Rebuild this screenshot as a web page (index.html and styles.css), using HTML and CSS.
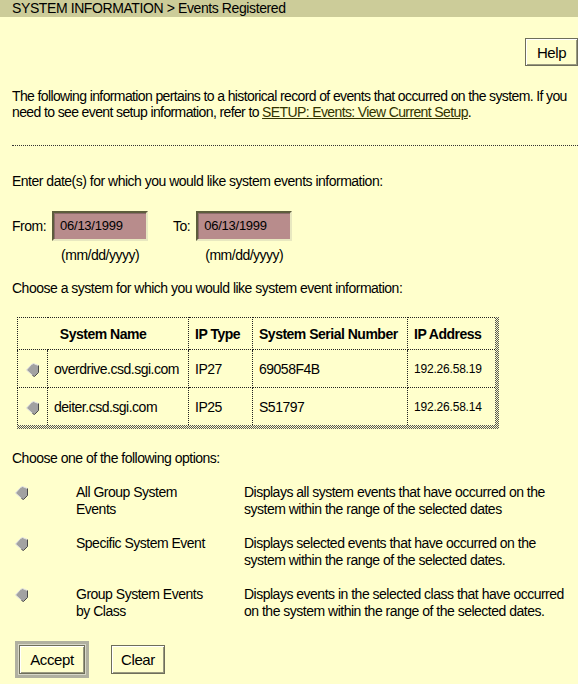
FILE: index.html
```html
<!DOCTYPE html>
<html>
<head>
<meta charset="utf-8">
<link rel="stylesheet" href="styles.css">
</head>
<body>
<div class="titlebar">SYSTEM INFORMATION &gt; Events Registered</div>
<div class="content">
  <div class="help-row"><button class="btn help">Help</button></div>
  <p class="intro">The following information pertains to a historical record of events that occurred on the system. If you<br>need to see event setup information, refer to <a href="#">SETUP: Events: View Current Setup</a>.</p>
  <div class="rule"></div>
  <p class="prompt p-date">Enter date(s) for which you would like system events information:</p>
  <div class="dates">
    <div class="date-group">
      <span class="date-label">From:</span>
      <div class="date-col">
        <div class="field">06/13/1999</div>
        <div class="hint">(mm/dd/yyyy)</div>
      </div>
    </div>
    <div class="date-group">
      <span class="date-label">To:</span>
      <div class="date-col">
        <div class="field">06/13/1999</div>
        <div class="hint">(mm/dd/yyyy)</div>
      </div>
    </div>
  </div>
  <p class="prompt p-sys">Choose a system for which you would like system event information:</p>
  <div class="table-shadow">
    <table class="systems">
      <colgroup>
        <col class="w-radio"><col class="w-name"><col class="w-type"><col class="w-serial"><col class="w-addr">
      </colgroup>
      <tr class="head">
        <th colspan="2" class="c-name">System Name</th>
        <th>IP Type</th>
        <th>System Serial Number</th>
        <th>IP Address</th>
      </tr>
      <tr>
        <td class="c-radio"><svg class="radio" viewBox="0 0 13 14" width="13" height="14"><polygon points="0.5,7 5.5,1.5 7.5,0.5 12.5,2.5 12.5,9.5 8.5,13.5 6.5,12.5" fill="#a2a2a2"/><polyline points="6.5,12.5 0.5,7 5.5,1.5 7.5,0.5 12.5,2.5" fill="none" stroke="#e4e4e4" stroke-width="1"/><polyline points="12.5,2.5 12.5,9.5 8.5,13.5 6.5,12.5" fill="none" stroke="#4a4a4a" stroke-width="1"/></svg></td>
        <td>overdrive.csd.sgi.com</td>
        <td>IP27</td>
        <td>69058F4B</td>
        <td class="small">192.26.58.19</td>
      </tr>
      <tr>
        <td class="c-radio"><svg class="radio" viewBox="0 0 13 14" width="13" height="14"><polygon points="0.5,7 5.5,1.5 7.5,0.5 12.5,2.5 12.5,9.5 8.5,13.5 6.5,12.5" fill="#a2a2a2"/><polyline points="6.5,12.5 0.5,7 5.5,1.5 7.5,0.5 12.5,2.5" fill="none" stroke="#e4e4e4" stroke-width="1"/><polyline points="12.5,2.5 12.5,9.5 8.5,13.5 6.5,12.5" fill="none" stroke="#4a4a4a" stroke-width="1"/></svg></td>
        <td>deiter.csd.sgi.com</td>
        <td>IP25</td>
        <td>S51797</td>
        <td class="small">192.26.58.14</td>
      </tr>
    </table>
  </div>
  <p class="prompt p-opt">Choose one of the following options:</p>
  <div class="options">
    <svg class="radio" viewBox="0 0 13 14" width="13" height="14"><polygon points="0.5,7 5.5,1.5 7.5,0.5 12.5,2.5 12.5,9.5 8.5,13.5 6.5,12.5" fill="#a2a2a2"/><polyline points="6.5,12.5 0.5,7 5.5,1.5 7.5,0.5 12.5,2.5" fill="none" stroke="#e4e4e4" stroke-width="1"/><polyline points="12.5,2.5 12.5,9.5 8.5,13.5 6.5,12.5" fill="none" stroke="#4a4a4a" stroke-width="1"/></svg>
    <div class="opt-label">All Group System<br>Events</div>
    <div class="opt-desc">Displays all system events that have occurred on the<br>system within the range of the selected dates</div>
    <svg class="radio" viewBox="0 0 13 14" width="13" height="14"><polygon points="0.5,7 5.5,1.5 7.5,0.5 12.5,2.5 12.5,9.5 8.5,13.5 6.5,12.5" fill="#a2a2a2"/><polyline points="6.5,12.5 0.5,7 5.5,1.5 7.5,0.5 12.5,2.5" fill="none" stroke="#e4e4e4" stroke-width="1"/><polyline points="12.5,2.5 12.5,9.5 8.5,13.5 6.5,12.5" fill="none" stroke="#4a4a4a" stroke-width="1"/></svg>
    <div class="opt-label">Specific System Event</div>
    <div class="opt-desc">Displays selected events that have occurred on the<br>system within the range of the selected dates.</div>
    <svg class="radio" viewBox="0 0 13 14" width="13" height="14"><polygon points="0.5,7 5.5,1.5 7.5,0.5 12.5,2.5 12.5,9.5 8.5,13.5 6.5,12.5" fill="#a2a2a2"/><polyline points="6.5,12.5 0.5,7 5.5,1.5 7.5,0.5 12.5,2.5" fill="none" stroke="#e4e4e4" stroke-width="1"/><polyline points="12.5,2.5 12.5,9.5 8.5,13.5 6.5,12.5" fill="none" stroke="#4a4a4a" stroke-width="1"/></svg>
    <div class="opt-label">Group System Events<br>by Class</div>
    <div class="opt-desc">Displays events in the selected class that have occurred<br>on the system within the range of the selected dates.</div>
  </div>
  <div class="actions">
    <div class="default-frame"><button class="btn accept">Accept</button></div>
    <button class="btn clear">Clear</button>
  </div>
</div>
</body>
</html>
```
FILE: styles.css
```css
html, body {
  margin: 0;
  padding: 0;
  background: #ffffcc;
}
body {
  font-family: "Liberation Sans", Arial, sans-serif;
  font-size: 14px;
  letter-spacing: -0.5px;
  color: #000;
  width: 578px;
  height: 684px;
  overflow: hidden;
}
.titlebar {
  background: #cccc99;
  height: 17px;
  line-height: 17px;
  padding-left: 12px;
  font-size: 14px;
  letter-spacing: -0.4px;
}
.content {
  padding: 0 0 0 12px;
}
.help-row {
  display: flex;
  justify-content: flex-end;
  padding-top: 21px;
}
.btn {
  font-family: inherit;
  font-size: 15px;
  letter-spacing: -0.4px;
  background: #ffffcc;
  color: #000;
  border: 1px solid #6e6e5a;
  box-shadow: inset 1px 1px 0 #ffffff, inset -1px -1px 0 #9a9a80;
  padding: 0;
  margin: 0;
}
.help {
  width: 53px;
  height: 28px;
}
.intro {
  margin: 22px 0 0 0;
  line-height: 16px;
  white-space: nowrap;
  letter-spacing: -0.62px;
}
.intro a {
  color: #333300;
  text-decoration: underline;
}
.rule {
  margin-top: 25px;
  border-top: 1px dotted #333;
  height: 0;
}
.prompt {
  margin: 0;
  line-height: 17px;
}
.p-date { margin-top: 27px; }
.dates {
  display: flex;
  gap: 25px;
  margin-top: 21px;
}
.date-group {
  display: flex;
  gap: 6px;
}
.date-label {
  line-height: 30px;
}
.date-col {
  display: flex;
  flex-direction: column;
  align-items: center;
}
.field {
  box-sizing: border-box;
  width: 96px;
  height: 30px;
  background: #b88c8c;
  border: 2px solid;
  border-color: #5d5d3c #e8e8c0 #e8e8c0 #5d5d3c;
  box-shadow: inset 1px 1px 0 #8a6a6a;
  font-size: 13px;
  letter-spacing: -0.25px;
  line-height: 26px;
  padding-left: 6px;
}
.hint {
  margin-top: 6px;
  line-height: 17px;
}
.p-sys { margin-top: 16px; }
.table-shadow {
  display: inline-block;
  margin: 20px 0 0 5px;
  padding: 0 4px 4px 0;
  background-color: #ffffcc;
  background-image: repeating-conic-gradient(#555 0 25%, #ffffcc 0 50%);
  background-size: 2px 2px;
}
.systems {
  border-collapse: collapse;
  table-layout: fixed;
  width: 477px;
  background: #ffffcc;
  border-top: 1px dotted #222;
  border-left: 1px dotted #222;
}
.w-radio { width: 30px; }
.w-name { width: 141px; }
.w-type { width: 64px; }
.w-serial { width: 155px; }
.w-addr { width: 87px; }
.systems th, .systems td {
  border: 1px dotted #222;
  text-align: left;
  padding: 0 6px;
  white-space: nowrap;
}
.systems th {
  font-weight: bold;
  height: 31px;
}
.systems td {
  height: 37px;
}
.systems tr:last-child td {
  border-bottom: none;
}
.systems th:last-child, .systems td:last-child {
  border-right: none;
}
.systems th.c-name {
  text-align: center;
}
.systems td.c-radio {
  padding: 0;
  text-align: center;
}
.systems td.c-radio .radio { vertical-align: middle; }
.systems td.small { font-size: 12px; letter-spacing: -0.2px; }
.p-opt { margin-top: 18px; }
.options {
  display: grid;
  grid-template-columns: 64px 168px auto;
  row-gap: 17px;
  margin-top: 17px;
  line-height: 17px;
}
.options .radio {
  margin: 2px 0 0 3px;
}
.actions {
  display: flex;
  align-items: center;
  gap: 22px;
  margin-top: 21px;
  margin-left: 3px;
}
.default-frame {
  border: 3px solid #b0b0a0;
  box-shadow: inset 0 0 0 1px #d8d8c8;
  padding: 1px;
}
.accept {
  width: 66px;
  height: 29px;
}
.clear {
  width: 54px;
  height: 29px;
}
```
